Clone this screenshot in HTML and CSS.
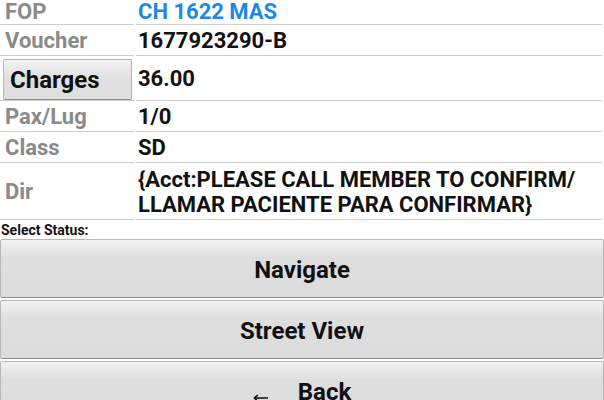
FILE: index.html
```html
<!DOCTYPE HTML>
<html>

<head>
    <link rel="stylesheet" href="styles.css">
</head>

<body>
    <div class="details">
        <div class="row first">
            <div class="label">FOP</div>
            <div class="value fop">CH 1622 MAS</div>
        </div>
        <div class="row">
            <div class="label">Voucher</div>
            <div class="value">1677923290-B</div>
        </div>
        <div class="row tall">
            <div class="label"><button class="small-btn">Charges</button></div>
            <div class="value">36.00</div>
        </div>
        <div class="row">
            <div class="label">Pax/Lug</div>
            <div class="value">1/0</div>
        </div>
        <div class="row">
            <div class="label">Class</div>
            <div class="value">SD</div>
        </div>
        <div class="row dir">
            <div class="label">Dir</div>
            <div class="value">{Acct:PLEASE CALL MEMBER TO CONFIRM/<br>LLAMAR PACIENTE PARA CONFIRMAR}</div>
        </div>
    </div>

    <p class="status-title">Select Status:</p>

    <div class="actions">
        <button class="big-btn">Navigate</button>
        <button class="big-btn">Street View</button>
        <button class="big-btn">
            <svg class="arrow" width="15" height="8" viewBox="0 0 15 8">
                <path d="M1 4H15M1 4L5 1M1 4L5 7" stroke="#111" stroke-width="1.5" fill="none"/>
            </svg>Back</button>
    </div>
</body>

</html>
```

FILE: styles.css
```css
body {
    margin: 0;
    background: white;
    font-family: Roboto, "Liberation Sans", sans-serif;
    font-weight: bold;
    overflow: hidden;
}

.row {
    display: grid;
    grid-template-columns: 134px 1fr;
    column-gap: 2px;
    margin-right: 2px;
    height: 31px;
}

.row.first {
    height: 25px;
}

.row.tall {
    height: 45px;
}

.row.dir {
    height: 57px;
}

.label, .value {
    display: flex;
    align-items: center;
    border-bottom: 1px solid #cfcfcf;
    font-size: 22px;
    padding-top: 1px;
}

.label {
    color: #8a8a8a;
    padding-left: 5px;
}

.value {
    color: #111;
    padding-left: 2px;
    line-height: 25px;
}

.row.first .label, .row.first .value {
    align-items: flex-start;
    line-height: 24px;
    padding-top: 0;
}

.fop {
    color: #1e88e5;
}

.row.tall .label {
    padding-left: 3px;
    padding-right: 2px;
    padding-top: 0;
}

.small-btn {
    width: 100%;
    height: 41px;
    margin-top: 3px;
    text-align: left;
    padding: 0 0 0 6px;
    font-family: inherit;
    font-weight: bold;
    font-size: 24px;
    color: #111;
    background: linear-gradient(#f4f4f4, #e2e2e2 40%, #dedede);
    border: 1px solid #b4b4b4;
    border-bottom-color: #8e8e8e;
    border-radius: 2px;
}

.status-title {
    margin: 0;
    height: 19px;
    padding-top: 2px;
    box-sizing: border-box;
    font-size: 14px;
    line-height: 17px;
    color: #111;
    padding-left: 1px;
}

.actions {
    display: flex;
    flex-direction: column;
    gap: 2px;
}

.big-btn {
    height: 59px;
    width: 604px;
    font-family: inherit;
    font-weight: bold;
    font-size: 24px;
    color: #111;
    background: linear-gradient(#f3f3f3, #dedede 30%, #dcdcdc);
    border: 1px solid #b8b8b8;
    border-bottom-color: #8c8c8c;
    border-radius: 2px;
    padding-top: 3px;
}

.arrow {
    margin-right: 30px;
    vertical-align: -2px;
}
```
